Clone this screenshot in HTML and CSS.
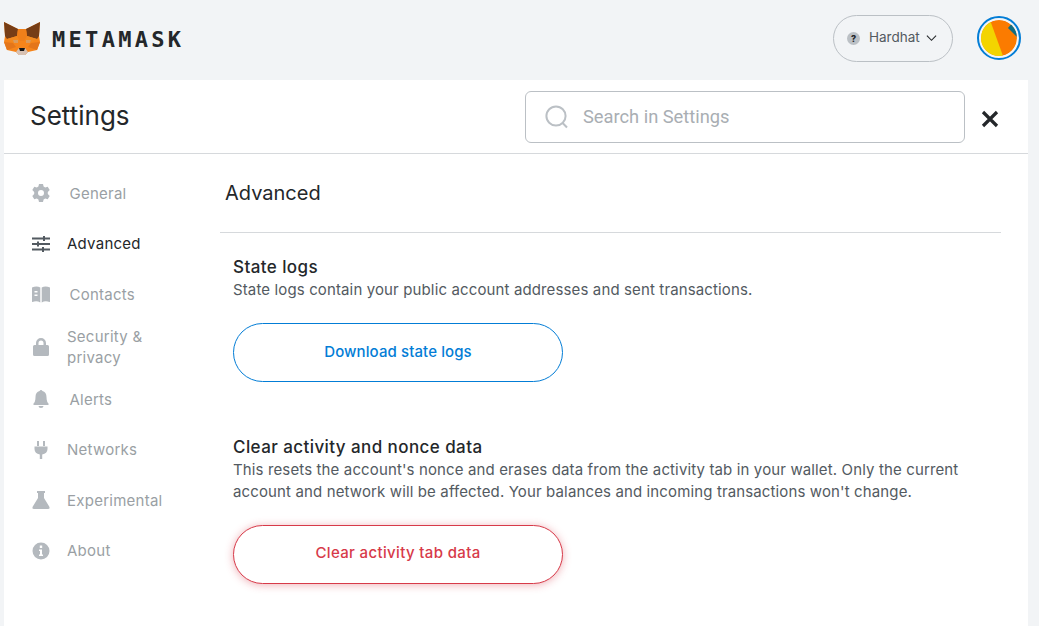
FILE: index.html
```html
<!doctype html>
<html lang="en">
<head>
  <meta charset="UTF-8" />
  <meta name="viewport" content="width=device-width, initial-scale=1.0" />
  <title>MetaMask Settings</title>
  <link rel="stylesheet" href="styles.css">
</head>
<body>
  <header class="topbar">
    <div class="brand">
      <svg class="fox" viewBox="0 0 36 33" aria-hidden="true">
        <polygon points="0,0 14,7 22,7 36,0 35,14 36,20 33,28 24,30 21,33 15,33 12,30 3,28 0,20 1,14" fill="#f6851b"/>
        <polygon points="0,0 14,7 13,14 3,17 1,14" fill="#763d16"/>
        <polygon points="36,0 22,7 23,14 33,17 35,14" fill="#763d16"/>
        <polygon points="14,7 22,7 23,14 20,19 16,19 13,14" fill="#f0801a"/>
        <polygon points="3,17 13,14 15,20 9,21" fill="#f28a20"/>
        <polygon points="33,17 23,14 21,20 27,21" fill="#f28a20"/>
        <polygon points="9,18 14,18 14,21 10,21" fill="#c0ad9e" opacity=".5"/>
        <polygon points="27,18 22,18 22,21 26,21" fill="#c0ad9e" opacity=".5"/>
        <polygon points="3,28 0,20 9,21 12,25" fill="#e4761b"/>
        <polygon points="33,28 36,20 27,21 24,25" fill="#e4761b"/>
        <polygon points="12,30 15,26 21,26 24,30 21,33 15,33" fill="#d7c1b3"/>
        <polygon points="15,26 21,26 20,29 16,29" fill="#161616"/>
      </svg>
      <span class="wordmark">METAMASK</span>
    </div>
    <div class="topbar-right">
      <button class="network" type="button">
        <span class="network-dot">?</span>
        <span class="network-name">Hardhat</span>
        <svg class="chevron" viewBox="0 0 12 8" aria-hidden="true"><path d="M1 1.500 6 6.500 11 1.500" fill="none" stroke="#24272a" stroke-width="1.200"/></svg>
      </button>
      <div class="avatar">
        <svg viewBox="0 0 36 36" aria-hidden="true">
          <circle cx="18" cy="18" r="18" fill="#fb7b00"/>
          <path d="M0 0H9L22 36H0Z" fill="#f3d400"/>
          <path d="M27 8 32 2 38 19Z" fill="#0f6d82"/>
        </svg>
      </div>
    </div>
  </header>

  <main class="card">
    <div class="card-head">
      <h1>Settings</h1>
      <div class="search">
        <svg class="search-icon" viewBox="0 0 24 24" aria-hidden="true">
          <circle cx="11" cy="11" r="9.600" fill="none" stroke="#bbc0c5" stroke-width="2"/>
          <path d="M17.600 18 22 22.500" stroke="#bbc0c5" stroke-width="2" fill="none"/>
        </svg>
        <input class="search-input" placeholder="Search in Settings" />
      </div>
      <svg class="close" viewBox="0 0 18 18" aria-label="Close"><path d="M2 2 16 16M16 2 2 16" stroke="#24272a" stroke-width="3.200"/></svg>
    </div>

    <div class="card-body">
      <nav class="nav">
        <a class="nav-item offset">
          <svg class="nav-icon" viewBox="0 0 20 20"><path fill-rule="evenodd" d="M8 1h4l.6 2.500 1.600.9 2.500-.7 2 3.400-1.900 1.800v2.200l1.900 1.800-2 3.400-2.500-.7-1.600.9L12 19H8l-.6-2.500-1.600-.9-2.500.7-2-3.400 1.900-1.800V8.900L1.300 7.100l2-3.400 2.500.7 1.600-.9ZM10 7a3 3 0 1 0 0 6 3 3 0 0 0 0-6Z"/></svg>
          <span>General</span>
        </a>
        <a class="nav-item active">
          <svg class="nav-icon" viewBox="0 0 20 20"><path d="M1 3.500h18v2H1zM1 9h18v2H1zM1 14.500h18v2H1zM12 2h2v5h-2zM6 7.500h2v5H6zM11 13h2v5h-2z"/></svg>
          <span>Advanced</span>
        </a>
        <a class="nav-item offset">
          <svg class="nav-icon" viewBox="0 0 20 20"><path fill-rule="evenodd" d="M1 3.500C4 2 7 2 9.300 3.500v15C7 17 4 17 1.500 18 1 18 1 17.500 1 17ZM10.700 3.500C13 2 16 2 19 3.500V17c0 .5 0 1-.5 1-2.500-1-5.500-1-7.800.5ZM3.500 7v1.600h3V7Zm0 3.500v1.600h3v-1.600Z"/></svg>
          <span>Contacts</span>
        </a>
        <a class="nav-item">
          <svg class="nav-icon" viewBox="0 0 20 20"><path d="M5 8V6a5 5 0 0 1 10 0v2h1.500a1.500 1.500 0 0 1 1.500 1.500v8a1.500 1.500 0 0 1-1.500 1.500h-13A1.500 1.500 0 0 1 2 17.500v-8A1.500 1.500 0 0 1 3.500 8Zm2.500 0h5V6a2.500 2.500 0 0 0-5 0Z"/></svg>
          <span>Security &amp;<br>privacy</span>
        </a>
        <a class="nav-item offset">
          <svg class="nav-icon" viewBox="0 0 20 20"><path d="M10 1a1.500 1.500 0 0 1 1.400 1.100C14 2.800 15.500 5 15.500 8c0 4 1 5.500 2 6.500V16h-15v-1.500c1-1 2-2.500 2-6.500 0-3 1.500-5.200 4.100-5.900A1.500 1.500 0 0 1 10 1ZM7.500 17h5a2.500 2 0 0 1-5 0Z"/></svg>
          <span>Alerts</span>
        </a>
        <a class="nav-item">
          <svg class="nav-icon" viewBox="0 0 20 20"><path d="M6 1h2v5H6zM12 1h2v5h-2zM3.500 6.500h13V9c0 3-2 5-5.300 5.400V19H8.800v-4.600C5.500 14 3.500 12 3.500 9Z"/></svg>
          <span>Networks</span>
        </a>
        <a class="nav-item">
          <svg class="nav-icon" viewBox="0 0 20 20"><path d="M6 1h8v2h-1v5l5.500 9a1.500 1.500 0 0 1-1.300 2H2.800a1.500 1.500 0 0 1-1.300-2L7 8V3H6Z"/></svg>
          <span>Experimental</span>
        </a>
        <a class="nav-item">
          <svg class="nav-icon" viewBox="0 0 20 20"><path fill-rule="evenodd" d="M10 1.500a8.500 8.500 0 1 1 0 17 8.500 8.500 0 0 1 0-17ZM8.800 4.500v2.600h2.400V4.500ZM8 8.500V10h1v3.500H8V15h4v-1.500h-1v-5Z"/></svg>
          <span>About</span>
        </a>
      </nav>

      <section class="content">
        <h2>Advanced</h2>
        <div class="rows">
          <div class="row">
            <h3>State logs</h3>
            <p>State logs contain your public account addresses and sent transactions.</p>
            <button class="btn btn-blue" type="button">Download state logs</button>
          </div>
          <div class="row">
            <h3>Clear activity and nonce data</h3>
            <p>This resets the account's nonce and erases data from the activity tab in your wallet. Only the current account and network will be affected. Your balances and incoming transactions won't change.</p>
            <button class="btn btn-red" type="button">Clear activity tab data</button>
          </div>
        </div>
      </section>
    </div>
  </main>
</body>
</html>
```

FILE: styles.css
```css
:root {
  --bg: #f2f4f6;
  --ink: #24272a;
  --muted: #9a9fa4;
  --line: #d6d9dc;
  --border: #bbc0c5;
  --blue: #037dd6;
  --red: #d73a49;
}

* { box-sizing: border-box; }

html, body { height: 100%; }

body {
  margin: 0;
  overflow: hidden;
  background: var(--bg);
  color: var(--ink);
  font-family: Inter, "Noto Sans", sans-serif;
}

.topbar {
  height: 80px;
  display: flex;
  justify-content: space-between;
  align-items: center;
  padding: 0 18px 4px 4px;
}

.brand {
  display: flex;
  align-items: center;
  gap: 12px;
}

.fox {
  width: 36px;
  height: 33px;
}

.wordmark {
  font-family: "DejaVu Sans Mono", monospace;
  font-size: 22px;
  font-weight: 700;
  letter-spacing: 3.300px;
  line-height: 26px;
  margin-top: 4px;
  color: #24272a;
}

.topbar-right {
  display: flex;
  align-items: center;
  gap: 24px;
}

.network {
  width: 120px;
  height: 47px;
  display: flex;
  align-items: center;
  padding: 0 15px 0 13px;
  border: 1px solid var(--border);
  border-radius: 24px;
  background: transparent;
  color: #535a61;
  font: inherit;
  font-size: 13.500px;
}

.network-dot {
  width: 13px;
  height: 13px;
  border-radius: 50%;
  background: #bbc0c5;
  color: #24272a;
  font-size: 9px;
  font-weight: 800;
  line-height: 13px;
  text-align: center;
}

.network-name {
  margin-left: 9px;
  margin-bottom: 2px;
}

.chevron {
  width: 11px;
  height: 8px;
  margin-left: auto;
}

.avatar {
  width: 44px;
  height: 44px;
  padding: 2px;
  border: 2px solid var(--blue);
  border-radius: 50%;
}

.avatar svg {
  display: block;
  width: 36px;
  height: 36px;
  border-radius: 50%;
}

.card {
  margin: 0 11px 0 4px;
  height: 546px;
  background: #fff;
  overflow: hidden;
}

.card-head {
  height: 74px;
  display: flex;
  align-items: center;
  padding: 0 28px 0 26px;
  border-bottom: 1px solid var(--line);
}

h1 {
  margin: 0 0 3px;
  font-size: 26px;
  font-weight: 400;
}

.search {
  position: relative;
  width: 440px;
  height: 52px;
  margin: 1px 15px 0 auto;
}

.search-icon {
  position: absolute;
  left: 20px;
  top: 14px;
  width: 24px;
  height: 24px;
}

.search-input {
  width: 100%;
  height: 100%;
  padding: 0 16px 2px 57px;
  border: 1px solid var(--border);
  border-radius: 6px;
  outline: none;
  font-family: Roboto, sans-serif;
  font-size: 18.300px;
}

.search-input::placeholder { color: #a9aeb3; }

.close {
  width: 18px;
  height: 18px;
  margin: 4px 1px 0;
}

.card-body { display: flex; }

.nav {
  width: 216px;
  flex: none;
  padding: 14px 0 0 27px;
}

.nav-item {
  min-height: 50.600px;
  padding: 6px 0;
  display: flex;
  align-items: center;
  font-size: 15px;
  letter-spacing: .25px;
  line-height: 21px;
  color: var(--muted);
}

.nav-item span { margin-left: 16px; }
.nav-item.offset span { margin-left: 18.500px; }
.nav-item.active { color: var(--ink); }

.nav-icon {
  width: 20px;
  height: 20px;
  flex: none;
  fill: #b4b9be;
}

.nav-item.active .nav-icon { fill: #535a61; }

.content {
  width: 781px;
  flex: none;
}

h2 {
  height: 79px;
  margin: 0;
  padding: 27px 0 0 5px;
  border-bottom: 1px solid var(--line);
  font-size: 20px;
  font-weight: 400;
}

.rows { padding: 24px 0 0 13px; }

.row + .row { margin-top: 55px; }

h3 {
  margin: 0;
  font-size: 17px;
  font-weight: 500;
  letter-spacing: .42px;
  line-height: 21px;
}

p {
  margin: 1px 0 0;
  font-size: 15px;
  letter-spacing: .13px;
  line-height: 22px;
  color: #535a61;
}

.btn {
  display: block;
  width: 330px;
  height: 59px;
  margin-top: 22px;
  padding-bottom: 3px;
  border: 1px solid;
  border-radius: 30px;
  background: #fff;
  font: inherit;
  font-size: 15px;
  font-weight: 500;
}

.btn-blue {
  border-color: var(--blue);
  color: var(--blue);
  letter-spacing: .1px;
}

.btn-red {
  padding-bottom: 5px;
  border-color: var(--red);
  color: var(--red);
  letter-spacing: .35px;
  box-shadow: 0 1px 8px rgba(215, 58, 73, .4);
}
```
